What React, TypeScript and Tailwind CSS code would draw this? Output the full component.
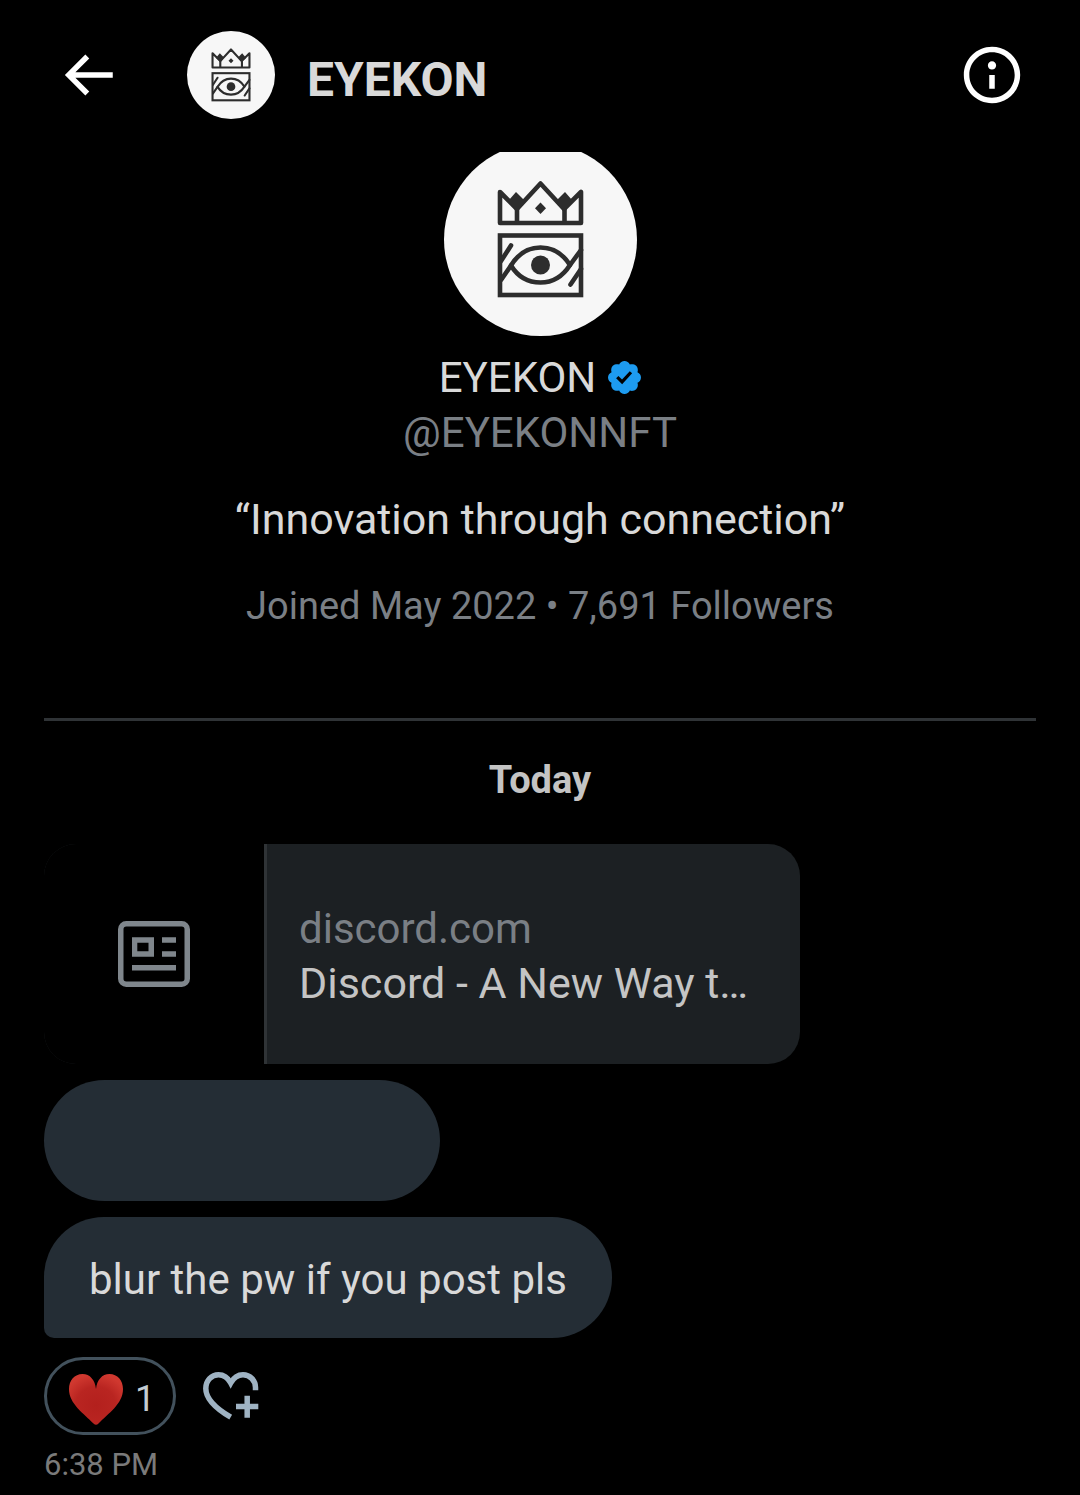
function BackIcon() {
    return (
        <svg viewBox="0 0 24 24" className="size-[66px]" fill="currentColor" aria-hidden="true">
            <path d="M7.414 13l5.043 5.04-1.414 1.42L3.586 12l7.457-7.46 1.414 1.42L7.414 11H21v2H7.414z"/>
        </svg>
    );
}

function InfoIcon() {
    return (
        <svg viewBox="0 0 24 24" className="size-[66px]" fill="currentColor" aria-hidden="true">
            <path
                d="M13.5 8.5c0 .83-.67 1.5-1.5 1.5s-1.5-.67-1.5-1.5S11.17 7 12 7s1.5.67 1.5 1.5zM13 17v-5h-2v5h2zm-1 5.25c5.66 0 10.25-4.59 10.25-10.25S17.66 1.75 12 1.75 1.75 6.34 1.75 12 6.34 22.25 12 22.25zM20.25 12c0 4.56-3.69 8.25-8.25 8.25S3.75 16.56 3.75 12 7.44 3.75 12 3.75s8.25 3.69 8.25 8.25z"/>
        </svg>
    );
}

function Logo({ className }: { className: string }) {
    return (
        <svg viewBox="0 0 193 193" className={className} role="img" aria-label="EYEKON">
            <circle cx="96.5" cy="96.5" r="96.5" fill="#f7f7f7"/>
            <g fill="none" stroke="#2d2d2d" strokeWidth="4.6" strokeLinejoin="round" strokeLinecap="round">
                <path d="M56 80V49L73 66L96.5 40.5L120 66L137 49V80Z"/>
                <path d="M73 64V80M120.5 64V80" strokeLinecap="butt"/>
                <rect x="56" y="92.5" width="81" height="59.5" strokeLinejoin="miter"/>
                <path d="M67 122.5C74 111 84 104.5 96.5 104.5S119 111 126 122C119 133 109 139.5 96.5 139.5S74 134 67 122.5Z"/>
                <path d="M67 102.5L57 118M67 122.5L57 137M126 122L137 107M126.5 141.5L137 126"/>
            </g>
            <g fill="#2d2d2d">
                <path d="M72 49L80 57L78 63L73 68L65 60V57Z"/>
                <path d="M121 49L113 57L115 63L120 68L128 60V57Z"/>
                <path d="M96.5 59.5L102 65.3L96.5 71L91 65.3Z"/>
                <circle cx="96.5" cy="122" r="9.5"/>
            </g>
        </svg>
    );
}

function VerifiedIcon() {
    return (
        <svg viewBox="1.6 1.6 18.8 18.8" className="size-[33px]" fill="#1d9bf0" role="img" aria-label="Verified account">
            <path
                d="M20.396 11c-.018-.646-.215-1.275-.57-1.816-.354-.54-.852-.972-1.438-1.246.223-.607.27-1.264.14-1.897-.131-.634-.437-1.218-.882-1.687-.47-.445-1.053-.75-1.687-.882-.633-.13-1.29-.083-1.897.14-.273-.587-.704-1.086-1.245-1.44S11.647 1.62 11 1.604c-.646.017-1.273.213-1.813.568s-.969.854-1.24 1.44c-.608-.223-1.267-.272-1.902-.14-.635.13-1.22.436-1.69.882-.445.47-.749 1.055-.878 1.688-.13.633-.08 1.29.144 1.896-.587.274-1.087.705-1.443 1.245-.356.54-.555 1.17-.574 1.817.02.647.218 1.276.574 1.817.356.54.856.972 1.443 1.245-.224.606-.274 1.263-.144 1.896.13.634.433 1.218.877 1.688.47.443 1.054.747 1.687.878.633.132 1.29.084 1.897-.136.274.586.705 1.084 1.246 1.439.54.354 1.17.551 1.816.569.647-.016 1.276-.213 1.817-.567s.972-.854 1.245-1.44c.604.239 1.266.296 1.903.164.636-.132 1.22-.447 1.68-.907.46-.46.776-1.044.908-1.681s.075-1.299-.165-1.903c.586-.274 1.084-.705 1.439-1.246.354-.54.551-1.17.569-1.816zM9.662 14.85l-3.429-3.428 1.293-1.302 2.072 2.072 4.4-4.794 1.347 1.246z"/>
        </svg>
    );
}

function ArticleIcon() {
    return (
        <svg viewBox="0 0 72 66" className="w-[72px] h-[66px]" fill="#7f868c" aria-hidden="true">
            <rect x="2.75" y="2.75" width="66.5" height="60.5" rx="5.5" fill="none" stroke="#7f868c" strokeWidth="5.5"/>
            <path fillRule="evenodd" d="M14 16.3H36V35.7H14ZM19.3 21.8V30.2H30.5V21.8Z"/>
            <path d="M44 16.3H58V21.8H44ZM44 30.2H58V35.7H44ZM14 44H58V49.5H14Z"/>
        </svg>
    );
}

function RedHeart() {
    return (
        <svg viewBox="0 0 54 51" className="w-[54px] h-[51px]" aria-hidden="true">
            <defs>
                <radialGradient id="heart" cx="0.5" cy="0.62" r="0.62">
                    <stop offset="0" stopColor="#b3201d"/>
                    <stop offset="0.6" stopColor="#b92521"/>
                    <stop offset="1" stopColor="#d0382f"/>
                </radialGradient>
            </defs>
            <path
                d="M27 15C28 6 33 0 40.5 0C48.5 0 54 6.500 54 15C54 30 39 39.500 29.500 49.500Q27 52 24.500 49.500C15 39.500 0 30 0 15C0 6.500 5.500 0 13.500 0C21 0 26 6 27 15Z"
                fill="url(#heart)"
            />
        </svg>
    );
}

function AddReactionIcon() {
    return (
        <svg viewBox="0 0 56 49" className="w-[56px] h-[49px]" fill="none" stroke="#9fb3c3" strokeWidth="5.5" aria-hidden="true">
            <path d="M27.7 45.2C12 36 2.8 27 2.8 16.5C2.8 8.5 8.5 2.8 15.5 2.8C21 2.8 25 6 27.7 11C30.5 6 34.5 2.8 40 2.8C47 2.8 52.5 8.5 52.5 15.5V18.3"/>
            <path d="M33 34.6H55.3M44.2 23.7V45.7"/>
        </svg>
    );
}

function App() {
    return (
        <div className="min-h-screen bg-black text-[#d9d9d9] font-['Roboto',sans-serif] text-[42px] leading-[55px]">
            <header className="flex items-center h-[152px] px-[55px] pb-0.5">
                <button type="button" aria-label="Back" className="text-white">
                    <BackIcon/>
                </button>
                <Logo className="size-[88px] ml-[66px]"/>
                <h1 className="ml-8 pt-2 flex-1 text-[48px] font-bold">EYEKON</h1>
                <button type="button" aria-label="Conversation info" className="text-white">
                    <InfoIcon/>
                </button>
            </header>

            <main className="px-11">
                <section className="flex flex-col items-center text-center border-b-3 border-[#2f3336] pb-21">
                    {/* top of the avatar is scrolled under the header */}
                    <div className="flex items-end h-[184px] overflow-hidden">
                        <Logo className="size-[193px] shrink-0"/>
                    </div>
                    <div className="flex items-center gap-3 mt-3.5">
                        <h2>EYEKON</h2>
                        <VerifiedIcon/>
                    </div>
                    <p className="text-[#7a7f85]">@EYEKONNFT</p>
                    <p className="mt-8 text-[43px]">“Innovation through connection”</p>
                    <p className="mt-8 text-[38px] text-[#7a7f85]">Joined May 2022 • 7,691 Followers</p>
                </section>

                <h3 className="mt-8 text-center text-[38px] font-bold text-[#c4c4c4]">Today</h3>

                <div className="mt-9 flex flex-col items-start gap-4">
                    <a href="#" className="flex w-[756px] max-w-full h-[220px] rounded-[32px] overflow-hidden bg-[#1c2023]">
                        <div className="flex items-center justify-center w-[220px] shrink-0 bg-black">
                            <ArticleIcon/>
                        </div>
                        <div className="flex flex-col justify-center flex-1 min-w-0 border-l-3 border-[#2f3336] px-8 pt-1">
                            <span className="text-[#7a7f85]">discord.com</span>
                            <span className="whitespace-nowrap text-[43px] text-[#c4c4c4]">Discord - A New Way t…</span>
                        </div>
                    </a>
                    <div className="w-[396px] h-[121px] rounded-full bg-[#242d35]"></div>
                    <div className="flex items-center h-[121px] px-[45px] pt-1 rounded-[60px] rounded-bl-[10px] bg-[#242d35]">
                        blur the pw if you post pls
                    </div>
                </div>

                <div className="mt-[19px] flex items-center gap-[27px]">
                    <button type="button" className="flex items-center gap-3 h-[78px] pl-[22px] pr-[18px] pt-1.5 rounded-full border-3 border-[#42515c] text-[36px] text-[#c3ccd3]">
                        <RedHeart/>
                        1
                    </button>
                    <button type="button" aria-label="Add reaction">
                        <AddReactionIcon/>
                    </button>
                </div>
                <p className="mt-2 text-[31px] leading-[44px] text-[#7a7a7a]">6:38 PM</p>
            </main>
        </div>
    );
}

export default App;
